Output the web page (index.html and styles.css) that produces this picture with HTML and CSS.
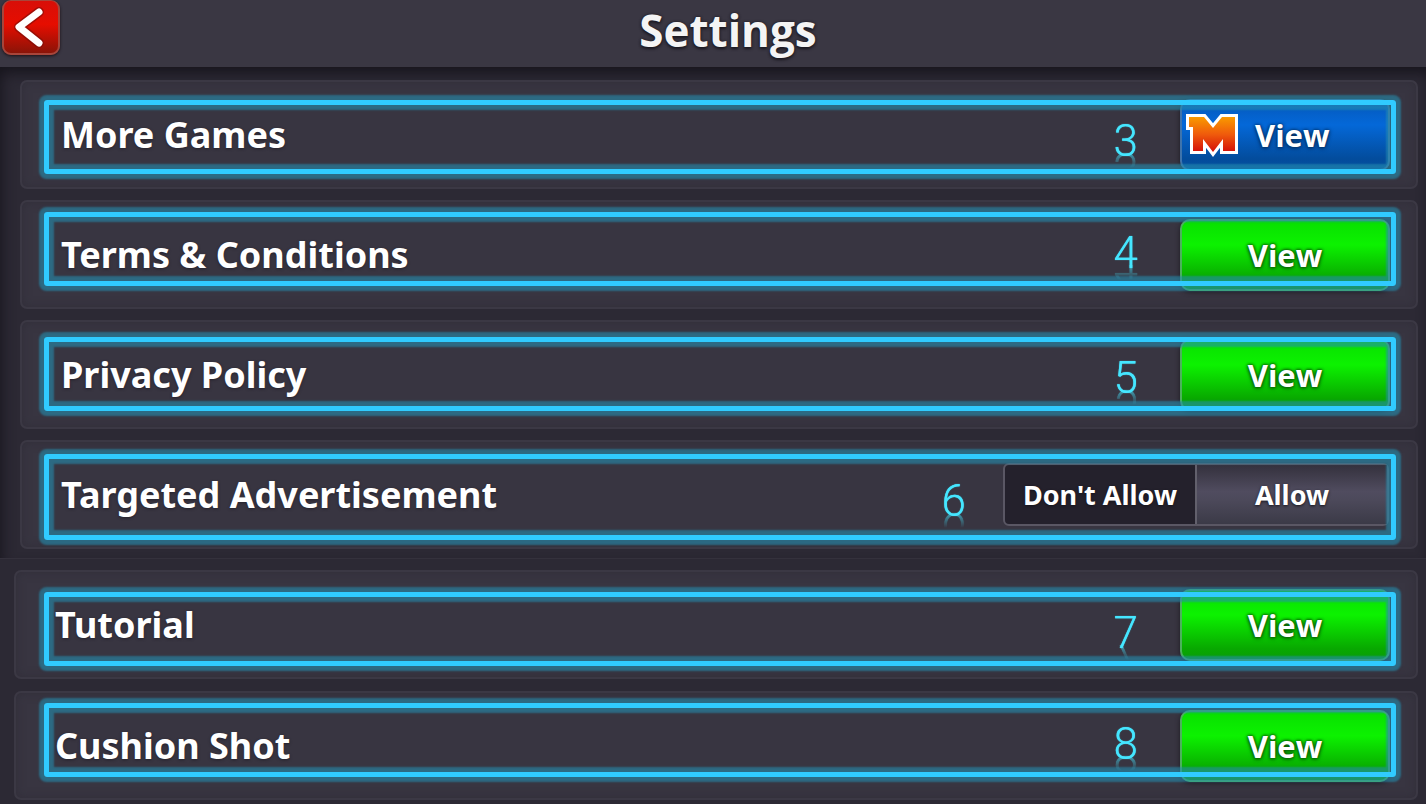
FILE: index.html
```html
<!DOCTYPE html>
<html lang="en">
<head>
    <meta charset="UTF-8">
    <meta name="viewport" content="width=device-width, initial-scale=1.0">
    <title>Settings</title>
    <link rel="stylesheet" href="styles.css">
</head>
<body>

<header class="header">
    <button class="back" aria-label="Back">
        <svg viewBox="0 0 58 56" width="58" height="56" aria-hidden="true">
            <path class="arrow-shadow" d="M37 13 L17 28 L37 44"/>
            <path class="arrow" d="M37 13 L17 28 L37 44"/>
        </svg>
    </button>
    <h1>Settings</h1>
</header>

<main>
    <section class="panel panel-legal">
        <div class="card card-games">
            <h2>More Games</h2>
            <button class="view view-blue">
                <svg class="logo" viewBox="0 0 54 46" width="54" height="46" aria-hidden="true">
                    <defs>
                        <linearGradient id="fire" x1="0" y1="0" x2="0" y2="1">
                            <stop offset="0" stop-color="#f99a00"/>
                            <stop offset="0.5" stop-color="#ef5a0c"/>
                            <stop offset="1" stop-color="#d40f08"/>
                        </linearGradient>
                    </defs>
                    <path d="M5 5 H20 L29 16 L38 5 H51 V39 H39 V27 L29 40 L19 27 V39 H9 V15 H5 Z"/>
                </svg>
                <span>View</span>
            </button>
            <div class="highlight"><span class="number">3</span></div>
        </div>
        <div class="card card-terms">
            <h2>Terms &amp; Conditions</h2>
            <button class="view">View</button>
            <div class="highlight"><span class="number">4</span></div>
        </div>
        <div class="card card-privacy">
            <h2>Privacy Policy</h2>
            <button class="view">View</button>
            <div class="highlight"><span class="number">5</span></div>
        </div>
        <div class="card card-ads">
            <h2>Targeted Advertisement</h2>
            <div class="toggle">
                <button aria-pressed="false">Don't Allow</button>
                <button aria-pressed="true">Allow</button>
            </div>
            <div class="highlight"><span class="number">6</span></div>
        </div>
    </section>

    <section class="panel panel-help">
        <div class="card card-tutorial">
            <h2>Tutorial</h2>
            <button class="view">View</button>
            <div class="highlight"><span class="number">7</span></div>
        </div>
        <div class="card card-cushion">
            <h2>Cushion Shot</h2>
            <button class="view">View</button>
            <div class="highlight"><span class="number">8</span></div>
        </div>
    </section>
</main>

</body>
</html>
```
FILE: styles.css
```css
* {
    box-sizing: border-box;
}
body {
    margin: 0;
    min-height: 100vh;
    background-color: #2c2934;
    color: #fff;
    font-family: "Noto Sans", "Open Sans", sans-serif;
}
button {
    margin: 0;
    padding: 0;
    border: none;
    color: #fff;
    font-family: inherit;
    font-weight: bold;
    cursor: pointer;
}

/* Header */
.header {
    display: grid;
    grid-template-columns: 60px 1fr 32px;
    height: 67px;
    padding-left: 2px;
    background-color: #3a3743;
}
.back {
    width: 58px;
    height: 55px;
    border: 2px solid #a8453a;
    border-top-width: 1px;
    border-radius: 9px;
    background: linear-gradient(#d80f08, #e60d00 45%, #8a1408);
    box-shadow: 0 1px 3px #1c1015;
    display: flex;
    align-items: center;
    justify-content: center;
}
.back svg {
    flex: none;
}
.back path {
    fill: none;
    stroke-linecap: round;
    stroke-linejoin: round;
}
.back .arrow {
    stroke: #fff;
    stroke-width: 7;
}
.back .arrow-shadow {
    stroke: #7c0d08;
    stroke-opacity: 0.6;
    stroke-width: 10;
}
h1 {
    margin: 0;
    text-align: center;
    font-family: "Open Sans", sans-serif;
    font-size: 44px;
    line-height: 60px;
    color: #f4f4f4;
    text-shadow: 0 2px 3px #1b1921, 0 0 3px #1b1921;
}

/* Panels and cards */
.panel {
    display: grid;
    gap: 11px;
}
.panel-legal {
    padding: 13px 8px 9px 20px;
    border-bottom: 1px solid #34313c;
    box-shadow: inset 3px 8px 14px -2px #17151d;
}
.panel-help {
    gap: 12px;
    padding: 11px 8px 3px 14px;
}
.card {
    position: relative;
    display: flex;
    align-items: center;
    justify-content: space-between;
    height: 109px;
    padding: 0 26px 0 39px;
    border: 2px solid #3b3844;
    border-radius: 7px;
    background-color: #383541;
    box-shadow: inset 0 0 10px #312e39;
}
h2 {
    margin: 0;
    font-size: 36px;
    line-height: 44px;
    text-shadow: 0 1px 3px #24212b;
}

/* Buttons */
.view {
    width: 210px;
    height: 72px;
    border: 2px solid #4cb25c;
    border-radius: 10px;
    background: linear-gradient(#08e000, #0cf200 35%, #08a800 85%, #0a9e08);
    font-family: "Open Sans", sans-serif;
    font-size: 31px;
    text-shadow: 0 0 3px #0a5c08, 0 0 3px #0a5c08, 0 1px 4px #0a5c08;
    box-shadow: 0 1px 5px #1d1b23;
}
.view-blue {
    display: flex;
    align-items: center;
    gap: 17px;
    padding-left: 2px;
    border-color: #3f74ac;
    background: linear-gradient(#0558bb, #0468d8 35%, #034c9c 85%, #04509f);
    text-shadow: 0 1px 4px #022c5c, 0 0 3px #022c5c;
}
.logo path {
    fill: url(#fire);
    stroke: #fff;
    stroke-width: 6;
    paint-order: stroke;
}
.toggle {
    display: flex;
    width: 386px;
    height: 63px;
    margin-right: 1px;
    border: 2px solid #5a5764;
    border-radius: 6px;
    background-color: #24212c;
}
.toggle button {
    flex: 1;
    background: none;
    font-size: 27px;
    text-shadow: 0 1px 3px #16141b;
}
.toggle button[aria-pressed="true"] {
    border-left: 2px solid #62606c;
    background: linear-gradient(#34313d, #504c5f 45%, #4c495a 60%, #3b3a47);
}

/* Numbered highlight frames drawn over the cards */
.highlight {
    position: absolute;
    top: 18px;
    left: 22px;
    right: 20px;
    display: flex;
    align-items: center;
    justify-content: flex-end;
    height: 74px;
    padding: 8px 253px 0 0;
    border: 5px solid #30cbff;
    border-radius: 3px;
    box-shadow: 0 0 2px 5px rgba(36, 141, 175, 0.6), inset 0 0 2px 5px rgba(36, 141, 175, 0.6);
    pointer-events: none;
}
.panel-help .highlight {
    left: 28px;
}
.card-terms .highlight,
.card-cushion .highlight {
    top: 10px;
}
.card-privacy .highlight {
    top: 15px;
}
.card-ads .highlight {
    top: 12px;
    height: 86px;
    padding-right: 425px;
}
.card-tutorial .highlight {
    top: 20px;
}
.number {
    font-family: Roboto, sans-serif;
    font-size: 44px;
    font-weight: 300;
    line-height: 44px;
    color: #45e6ff;
    text-shadow: 0 0 1px #45e6ff;
    -webkit-box-reflect: below -17px linear-gradient(transparent 50%, rgba(0, 0, 0, 0.6) 84%);
}
```
